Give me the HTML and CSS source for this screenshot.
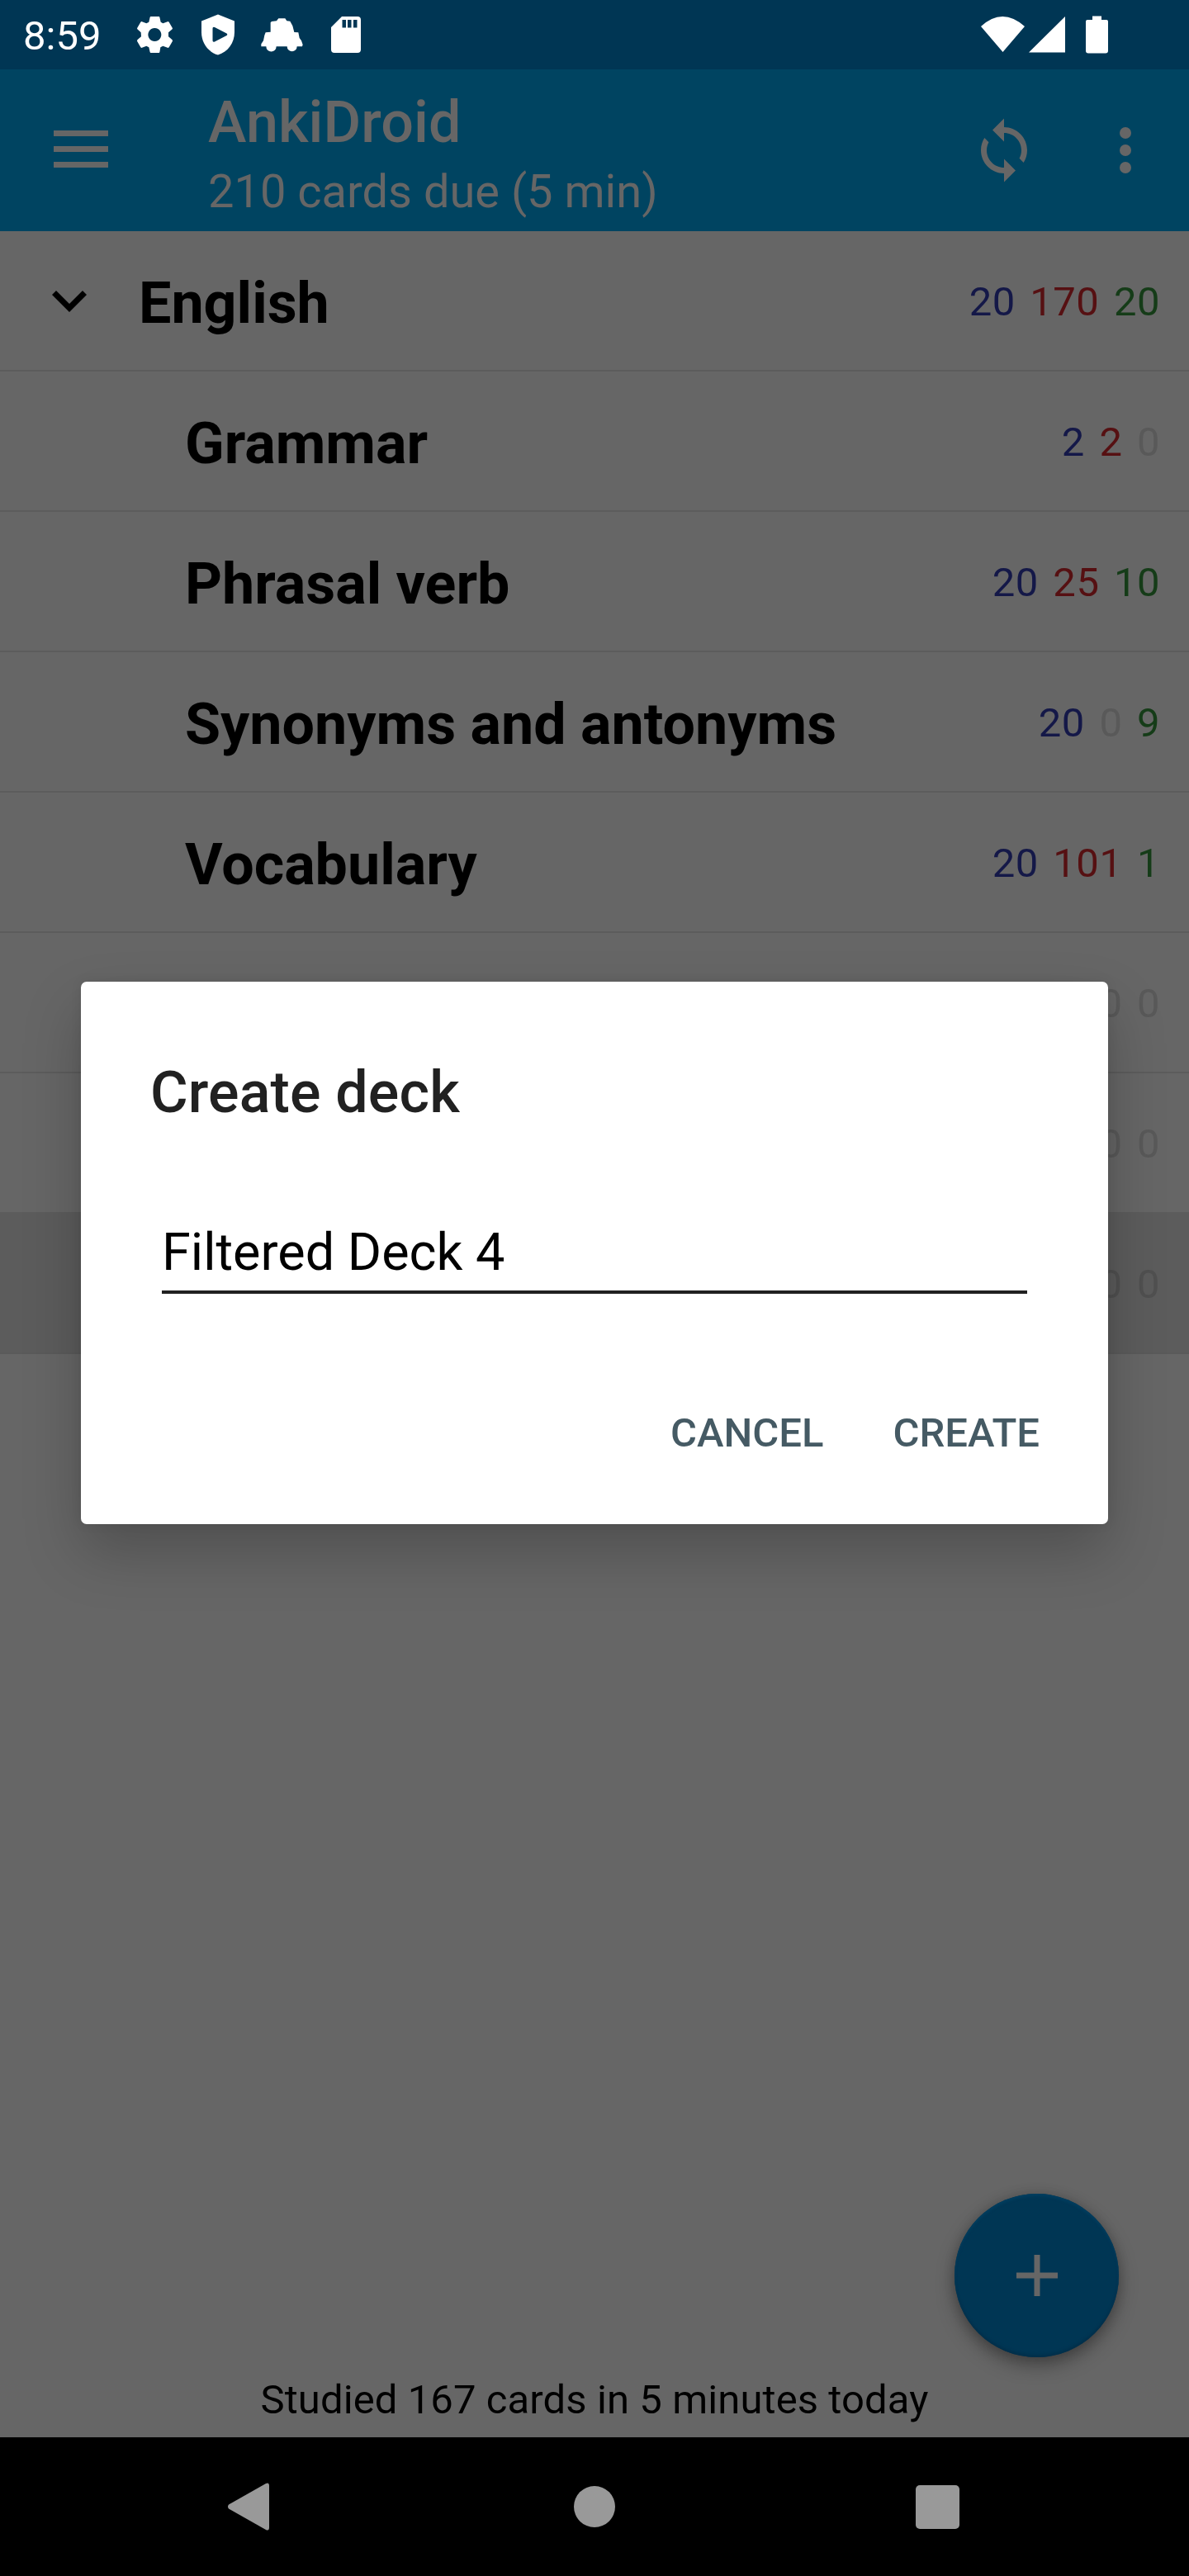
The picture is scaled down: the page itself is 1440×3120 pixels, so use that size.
FILE: index.html
```html
<!DOCTYPE html>
<html lang="en">
<head>
<meta charset="utf-8">
<title>AnkiDroid</title>
<link rel="stylesheet" href="styles.css">
</head>
<body>
<div class="screen">
  <header class="status">
    <span class="clock">8:59</span>
    <svg class="st gear" viewBox="48 31 129 132"><path fill-rule="evenodd" d="M97 31H128L130 33L134 51L142 56L161 49L164 51L177 74L176 77L162 89V104L176 116L177 120L164 143L161 145L142 138L133 143L130 161L128 163H97L95 161L91 143L82 138L64 145L61 143L48 120L49 116L63 104L62 89L49 77L48 74L61 51L64 49L82 56L91 51L95 33ZM112 73a24 24 0 1 0 .1 0Z"/></svg>
    <svg class="st shield" viewBox="0 0 42 50"><path fill-rule="evenodd" d="M21 0.500L41 8.500V22C41 35 33 46 21 49.500C9 46 1 35 1 22V8.500ZM14.500 17.500Q14.500 15 17 16L31.500 23.500Q33 24.700 31.500 26L17 33.500Q14.500 34.500 14.500 32Z"/></svg>
    <svg class="st car" viewBox="498 36 153 123"><path d="M533 52L537 48L555 46L562 37H586L592 46L604 47L613 64L619 87L634 88L638 108L645 118L650 132L648 139H629A18 18 0 0 1 593 139H554A18 18 0 0 1 517 139H499V130L507 118L511 98L515 88L533 86Z"/></svg>
    <svg class="st sd" viewBox="0 0 36 44"><path fill-rule="evenodd" d="M13 0H32a4 4 0 0 1 4 4V40a4 4 0 0 1-4 4H4a4 4 0 0 1-4-4V13ZM13.500 4v9.500h4.500V4ZM20 4v9.500h4.500V4ZM27 4v9.500h4.500V4Z"/></svg>
    <svg class="st signals" viewBox="0 0 156 48"><path d="M0 13Q26-11 53 13L26.500 44ZM58 44.500L102 1V44.500ZM127 7a2 2 0 0 1 2-2h6V0.500h11V5h6a2 2 0 0 1 2 2V42.500a3 3 0 0 1-3 3H130a3 3 0 0 1-3-3Z"/></svg>
  </header>
  <div class="toolbar">
    <svg class="menu" viewBox="0 0 66 46"><path d="M0 0h66v7H0zM0 19h66v7H0zM0 38h66v7H0z"/></svg>
    <div class="titles"><div class="title">AnkiDroid</div><div class="subtitle">210 cards due (5 min)</div></div>
    <svg class="sync" viewBox="0 0 24 24"><path d="M12 4V1L8 5l4 4V6c3.310 0 6 2.690 6 6 0 1.010-.25 1.970-.7 2.800l1.460 1.460C19.540 15.030 20 13.570 20 12c0-4.420-3.580-8-8-8zm0 14c-3.310 0-6-2.690-6-6 0-1.010.25-1.970.7-2.800L5.240 7.740C4.460 8.970 4 10.430 4 12c0 4.420 3.580 8 8 8v3l4-4-4-4v3z"/></svg>
    <svg class="more" viewBox="0 0 14 56"><circle cx="7" cy="7" r="7"/><circle cx="7" cy="28" r="7"/><circle cx="7" cy="49" r="7"/></svg>
  </div>
  <main class="decks">
    <div class="deck parent"><svg class="chev" viewBox="0 0 42 26"><path d="M5 0L21 16 37 0 42 5 21 26 0 5z"/></svg><span class="name">English</span><span class="n new">20</span><span class="n lrn">170</span><span class="n rev">20</span></div>
    <div class="deck"><span class="name">Grammar</span><span class="n new">2</span><span class="n lrn">2</span><span class="n">0</span></div>
    <div class="deck"><span class="name">Phrasal verb</span><span class="n new">20</span><span class="n lrn">25</span><span class="n rev">10</span></div>
    <div class="deck"><span class="name">Synonyms and antonyms</span><span class="n new">20</span><span class="n">0</span><span class="n rev">9</span></div>
    <div class="deck"><span class="name">Vocabulary</span><span class="n new">20</span><span class="n lrn">101</span><span class="n rev">1</span></div>
    <div class="deck"><span class="name filtered">heard card</span><span class="n">0</span><span class="n">0</span><span class="n">0</span></div>
    <div class="deck"><span class="name"></span><span class="n">0</span><span class="n">0</span><span class="n">0</span></div>
    <div class="deck current"><span class="name"></span><span class="n">0</span><span class="n">0</span><span class="n">0</span></div>
  </main>
  <div class="studied">Studied 167 cards in 5 minutes today</div>
  <nav class="navbar">
    <svg class="back" viewBox="0 0 50 58"><path d="M46 1Q50-1 50 4V54Q50 59 46 57L1 31.500Q-1 29 1 26.500Z"/></svg>
    <svg class="home" viewBox="0 0 50 50"><circle cx="25" cy="25" r="25"/></svg>
    <svg class="recent" viewBox="0 0 53 53"><rect width="53" height="53" rx="5"/></svg>
  </nav>
  <div class="fab"><svg viewBox="0 0 50 50"><path d="M21.500 0h7v21.500H50v7H28.500V50h-7V28.500H0v-7h21.500z"/></svg></div>
  <section class="dialog">
    <h1 class="heading">Create deck</h1>
    <div class="field">Filtered Deck 4</div>
    <div class="actions"><span class="cancel">CANCEL</span><span class="create">CREATE</span></div>
  </section>
</div>
</body>
</html>
```
FILE: styles.css
```css
* { box-sizing: border-box; }
body { margin: 0; font-family: Roboto, "Liberation Sans", sans-serif; }
svg { display: block; flex: none; }
.screen { position: relative; width: 1440px; height: 3120px; background: #666; display: flex; flex-direction: column; overflow: hidden; }

.status { height: 84px; background: #003654; color: #fff; fill: #fff; display: flex; align-items: flex-start; padding-left: 28px; }
.clock { width: 138px; font-size: 49px; line-height: 56px; padding-top: 16px; }
.gear { width: 43px; height: 44px; margin: 20px 0 0; }
.shield { width: 42px; height: 50px; margin: 17px 0 0 34px; }
.car { width: 51px; height: 41px; margin: 22px 0 0 31px; }
.sd { width: 36px; height: 44px; margin: 20px 0 0 34px; }
.signals { width: 156px; height: 48px; margin: 19px 96px 0 auto; }

.toolbar { height: 196px; background: #004461; color: #666; fill: #666; display: flex; align-items: flex-start; }
.menu { width: 66px; height: 46px; margin: 74px 0 0 65px; }
.titles { margin: 22px 0 0 121px; flex: 1; white-space: nowrap; }
.title { font-size: 70px; line-height: 84px; font-weight: 500; letter-spacing: 0.1px; }
.subtitle { font-size: 56px; line-height: 84px; }
.sync { width: 84px; height: 84px; margin: 56px 0 0; }
.more { width: 14px; height: 56px; margin: 70px 70px 0 98px; }

.deck { height: 170px; border-bottom: 2px solid #5c5c5c; display: flex; align-items: flex-start; padding: 44px 35px 0 224px; line-height: 84px; color: #000; white-space: nowrap; }
.parent { padding-left: 63px; }
.chev { width: 42px; height: 26px; margin: 28px 63px 0 0; }
.name { flex: 1; font-size: 70px; line-height: 86px; font-weight: 700; }
.filtered { color: #47425a; }
.n { font-size: 49px; letter-spacing: 0.5px; margin-left: 17.500px; color: #595959; }
.new { color: #141848; }
.lrn { color: #561012; }
.rev { color: #153c18; }
.current { height: 172px; background: #5c5c5c; border-color: #5a5a5a; margin-top: -2px; padding-top: 46px; }
.current .n { color: #505050; }

.studied { margin-top: auto; height: 86px; text-align: center; font-size: 49px; line-height: 82px; letter-spacing: 0.09px; color: #000; }
.navbar { height: 168px; background: #000; fill: #999; display: flex; align-items: center; justify-content: space-between; padding: 0 278px 0 276px; }
.back { width: 50px; height: 58px; }
.home { width: 50px; height: 50px; margin-left: 5px; }
.recent { width: 53px; height: 53px; }

.fab { position: absolute; left: 1156px; top: 2657px; width: 199px; height: 198px; border-radius: 50%; background: #003654; fill: #666; display: flex; align-items: center; justify-content: center; box-shadow: 0 10px 22px rgba(0,0,0,.34), 0 0 14px rgba(0,0,0,.15), inset 0 3px 3px #003d5e, inset 0 -3px 3px #00304b; }
.fab svg { width: 50px; height: 50px; }

.dialog { position: absolute; left: 98px; top: 1189px; width: 1244px; height: 657px; border-radius: 7px; background: #fff; padding: 92px 84px 0 84px; box-shadow: 0 34px 70px rgba(0,0,0,.22), 0 0 14px rgba(0,0,0,.08); white-space: nowrap; }
.heading { margin: 0; font-size: 70px; line-height: 84px; font-weight: 500; letter-spacing: 0.15px; color: #212121; }
.field { margin: 104px 14px 0; height: 98px; border-bottom: 4px solid #212121; font-size: 63px; line-height: 95px; color: #000; }
.actions { display: flex; justify-content: flex-end; gap: 84px; margin: 139px -1px 0 0; font-size: 49px; line-height: 60px; font-weight: 500; color: #455a64; }
```
